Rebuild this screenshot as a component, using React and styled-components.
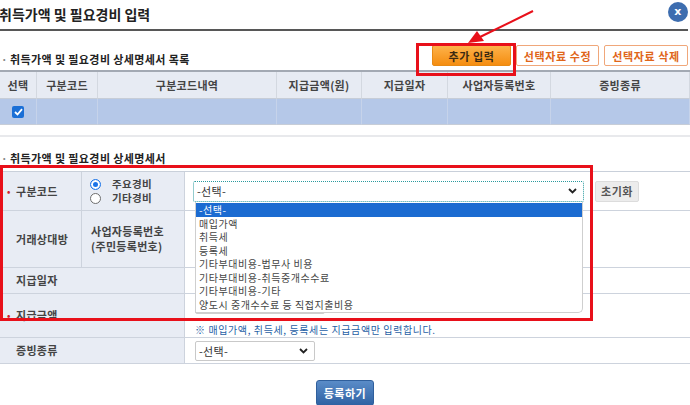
import React from 'react';
import styled, { createGlobalStyle } from 'styled-components';

const GlobalStyle = createGlobalStyle`
    html, body {
        margin: 0;
        padding: 0;
        background: #fff;
    }
    body {
        font-family: "Noto Sans CJK KR", "Noto Sans", sans-serif;
        color: #333;
        letter-spacing: 0.3px;
    }
`;

const Page = styled.div`
    position: relative;
    width: 690px;
    height: 405px;
    overflow: hidden;
`;

const TitleBar = styled.header`
    display: flex;
    align-items: center;
    justify-content: space-between;
    height: 31px;
    padding-bottom: 2px;
    box-sizing: border-box;
    border-bottom: 2px solid #575757;
    margin-right: 2px;
`;

const Title = styled.h1`
    margin: 0 0 0 -1px;
    font-size: 14px;
    font-weight: 700;
    letter-spacing: 0;
    color: #222;
`;

const CloseButton = styled.span`
    display: flex;
    align-items: center;
    justify-content: center;
    width: 20px;
    height: 20px;
    margin-top: -4px;
    border-radius: 50%;
    background: #3d6daf;
    color: #fff;
    font-size: 11px;
    font-weight: 700;
    font-family: "DejaVu Sans", sans-serif;
`;

const ListHead = styled.div`
    display: flex;
    align-items: flex-end;
    justify-content: space-between;
    height: 39px;
    padding-bottom: 4px;
    box-sizing: border-box;
`;

const SectionTitle = styled.h2`
    margin: 0;
    padding-left: 1px;
    font-size: 11px;
    font-weight: 700;
    line-height: 14px;
    letter-spacing: 0.4px;
    color: #222;
    &::before {
        content: '·';
        margin-right: 2px;
        color: #888;
    }
`;

const ButtonGroup = styled.div`
    display: flex;
    gap: 5px;
    margin-right: 2px;
`;

const ActionButton = styled.button`
    width: ${p => p.$w}px;
    height: 21px;
    padding: 0;
    border-radius: 2px;
    font-family: inherit;
    font-size: 11px;
    font-weight: 700;
    letter-spacing: 0.6px;
    cursor: pointer;
    ${p => p.$primary ? `
        background: linear-gradient(#fdb24a, #f58d10);
        border: 1px solid #e88a14;
        color: #3b2a12;
    ` : `
        background: #fff;
        border: 1px solid #f0a77a;
        color: #e0661a;
    `}
`;

const ListTable = styled.div`
    display: grid;
    grid-template-columns: 37px 61px 179px 85px 86px 103px 1fr;
    border-top: 2px solid #a3a9b3;
`;

const HeadCell = styled.div`
    height: 26px;
    display: flex;
    align-items: center;
    justify-content: center;
    background: #e7ebf3;
    border-bottom: 1px solid #c7cdd7;
    border-right: 1px solid #d3d8e0;
    font-size: 11px;
    font-weight: 700;
    color: #444;
    &:last-child { border-right: none; }
`;

const RowCell = styled.div`
    height: 25px;
    display: flex;
    align-items: center;
    justify-content: center;
    background: #b5c8e8;
    border-bottom: 1px solid #c7cdd7;
    border-right: 1px solid #c6d3ea;
`;

const CheckBox = styled.span`
    display: flex;
    align-items: center;
    justify-content: center;
    width: 12px;
    height: 12px;
    border-radius: 2px;
    background: #1a6fd6;
`;

const Divider = styled.hr`
    margin: 10px 0 0;
    border: none;
    height: 2px;
    background: #e8e9ec;
`;

const FormHead = styled.div`
    display: flex;
    align-items: flex-end;
    height: 34px;
    padding-bottom: 6px;
    box-sizing: border-box;
`;

const FormTable = styled.div`
    display: grid;
    grid-template-columns: 82px 103px 1fr;
    grid-template-rows: 39px 57px 26px 44px 26px;
    border-top: 1px solid #c9d0da;
`;

const Label = styled.div`
    grid-column: ${p => p.$span ? '1 / 3' : 'auto'};
    display: flex;
    align-items: center;
    padding-left: ${p => p.$pad || 16}px;
    background: #e8ecf4;
    border-bottom: 1px solid #cdd3dd;
    border-right: 1px solid #cdd3dd;
    font-size: 11px;
    font-weight: 700;
    line-height: 15px;
    color: #444;
`;

const Star = styled.span`
    width: 9px;
    margin-left: -9px;
    color: #d0202a;
    font-size: 9px;
`;

const Cell = styled.div`
    display: flex;
    flex-direction: ${p => p.$column ? 'column' : 'row'};
    align-items: ${p => p.$column ? 'flex-start' : 'center'};
    padding-left: ${p => p.$pad ?? 8}px;
    border-bottom: 1px solid #cdd3dd;
    background: #fff;
`;

const RadioGroup = styled.div`
    display: flex;
    flex-direction: column;
    justify-content: center;
    padding-left: 8px;
    background: #e8ecf4;
    border-bottom: 1px solid #cdd3dd;
    border-right: 1px solid #cdd3dd;
`;

const RadioRow = styled.label`
    display: flex;
    align-items: center;
    gap: 11px;
    height: 14px;
    font-size: 10.5px;
    font-weight: 700;
    line-height: 14px;
    color: #444;
`;

const RadioDot = styled.span`
    box-sizing: border-box;
    width: 11px;
    height: 11px;
    border-radius: 50%;
    border: 1px solid ${p => p.$on ? '#1a73e8' : '#6e6e6e'};
    background: #fff;
    box-shadow: ${p => p.$on ? 'inset 0 0 0 2px #fff, inset 0 0 0 6px #1a73e8' : 'none'};
`;

const SelectBox = styled.div`
    box-sizing: border-box;
    display: flex;
    align-items: center;
    justify-content: space-between;
    width: ${p => p.$w}px;
    height: ${p => p.$h || 21}px;
    padding: 0 6px 0 3px;
    border: ${p => p.$focus ? '1px dotted #2b9a9e' : '1px solid #c9c9c9'};
    border-radius: 2px;
    background: #fff;
    font-size: 11px;
    color: #333;
`;

const ResetButton = styled.button`
    height: 21px;
    width: 44px;
    margin-left: 11px;
    padding: 0;
    border: 1px solid #dcdcdc;
    border-radius: 2px;
    background: #ececec;
    font-family: inherit;
    font-size: 11px;
    font-weight: 700;
    letter-spacing: 0.5px;
    color: #555;
`;

const TextInput = styled.div`
    box-sizing: border-box;
    width: 130px;
    height: 17px;
    margin-top: 5px;
    border: 1px solid #cfcfcf;
    border-radius: 2px;
`;

const Note = styled.p`
    margin: 8px 0 0;
    font-size: 10px;
    letter-spacing: 0.6px;
    color: #1f5fa6;
`;

const Footer = styled.div`
    display: flex;
    justify-content: center;
    padding-top: 16px;
`;

const SubmitButton = styled.button`
    width: 58px;
    height: 26px;
    padding: 0;
    border: 1px solid #2f5f9c;
    border-radius: 3px;
    background: linear-gradient(#5a8cc8, #2f62a3);
    color: #fff;
    font-family: inherit;
    font-size: 11px;
    font-weight: 700;
    letter-spacing: 0.5px;
`;

const Dropdown = styled.ul`
    position: absolute;
    left: 195px;
    top: 202px;
    width: 388px;
    height: 111px;
    margin: 0;
    padding: 1px 0 0;
    box-sizing: border-box;
    list-style: none;
    background: #fff;
    border: 1px solid #cfcfcf;
    border-top: none;
    border-radius: 0 0 5px 0;
`;

const Option = styled.li`
    height: 13.5px;
    padding-left: 3px;
    font-size: 10px;
    line-height: 13.5px;
    letter-spacing: 0.55px;
    color: ${p => p.$active ? '#fff' : '#444'};
    background: ${p => p.$active ? '#1b6bd1' : 'transparent'};
    white-space: nowrap;
`;

const Highlight = styled.div`
    position: absolute;
    left: ${p => p.$x}px;
    top: ${p => p.$y}px;
    width: ${p => p.$w}px;
    height: ${p => p.$h}px;
    box-sizing: border-box;
    border: 3px solid #e8101a;
    pointer-events: none;
`;

const Arrow = styled.svg`
    position: absolute;
    left: 0;
    top: 0;
    pointer-events: none;
`;

const Chevron = () => (
    <svg width="9" height="6" viewBox="0 0 9 6">
        <path d="M1 1l3.5 3.5L8 1" fill="none" stroke="#222" strokeWidth="1.8" />
    </svg>
);

const headers = ['선택', '구분코드', '구분코드내역', '지급금액(원)', '지급일자', '사업자등록번호', '증빙종류'];

const options = [
    '-선택-',
    '매입가액',
    '취득세',
    '등록세',
    '기타부대비용-법무사 비용',
    '기타부대비용-취득중개수수료',
    '기타부대비용-기타',
    '양도시 중개수수료 등 직접지출비용',
];

const App = () => (
    <Page>
        <GlobalStyle />
        <TitleBar>
            <Title>취득가액 및 필요경비 입력</Title>
            <CloseButton>x</CloseButton>
        </TitleBar>

        <ListHead>
            <SectionTitle>취득가액 및 필요경비 상세명세서 목록</SectionTitle>
            <ButtonGroup>
                <ActionButton $primary $w={79}>추가 입력</ActionButton>
                <ActionButton $w={83}>선택자료 수정</ActionButton>
                <ActionButton $w={84}>선택자료 삭제</ActionButton>
            </ButtonGroup>
        </ListHead>

        <ListTable>
            {headers.map(h => <HeadCell key={h}>{h}</HeadCell>)}
            {headers.map((h, i) => (
                <RowCell key={h}>
                    {i === 0 && (
                        <CheckBox>
                            <svg width="9" height="8" viewBox="0 0 9 8">
                                <path d="M1 4l2.5 2.5L8 1.2" fill="none" stroke="#fff" strokeWidth="1.8" />
                            </svg>
                        </CheckBox>
                    )}
                </RowCell>
            ))}
        </ListTable>

        <Divider />

        <FormHead>
            <SectionTitle>취득가액 및 필요경비 상세명세서</SectionTitle>
        </FormHead>

        <FormTable>
            <Label><Star>•</Star>구분코드</Label>
            <RadioGroup>
                <RadioRow><RadioDot $on />주요경비</RadioRow>
                <RadioRow><RadioDot />기타경비</RadioRow>
            </RadioGroup>
            <Cell>
                <SelectBox $focus $w={391}>-선택-<Chevron /></SelectBox>
                <ResetButton>초기화</ResetButton>
            </Cell>

            <Label>거래상대방</Label>
            <Label $pad={9}>사업자등록번호<br />(주민등록번호)</Label>
            <Cell />

            <Label $span>지급일자</Label>
            <Cell />

            <Label $span><Star>•</Star>지급금액</Label>
            <Cell $column $pad={10}>
                <TextInput />
                <Note>※ 매입가액, 취득세, 등록세는 지급금액만 입력합니다.</Note>
            </Cell>

            <Label $span>증빙종류</Label>
            <Cell $pad={10}>
                <SelectBox $w={120} $h={20}>-선택-<Chevron /></SelectBox>
            </Cell>
        </FormTable>

        <Footer>
            <SubmitButton>등록하기</SubmitButton>
        </Footer>

        <Dropdown>
            {options.map((o, i) => <Option key={o} $active={i === 0}>{o}</Option>)}
        </Dropdown>

        <Highlight $x={416} $y={43} $w={100} $h={33} />
        <Highlight $x={0} $y={165} $w={593} $h={156} />

        <Arrow width="690" height="80" viewBox="0 0 690 80">
            <line x1="533" y1="11" x2="480" y2="37" stroke="#e8101a" strokeWidth="2" />
            <polygon points="468,43 477,31 484,41" fill="#e8101a" />
        </Arrow>
    </Page>
);

export default App;
